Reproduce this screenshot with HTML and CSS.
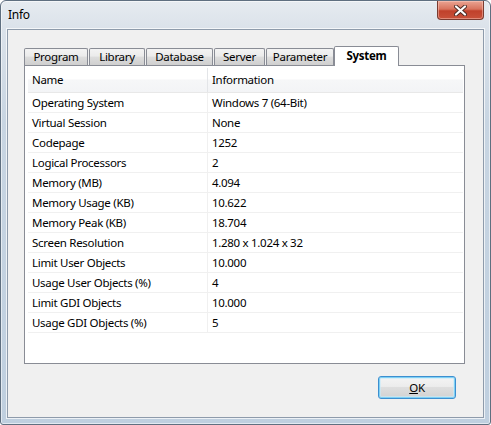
FILE: index.html
```html
<!DOCTYPE html>
<html>
<head>
<meta charset="utf-8">
<link rel="stylesheet" href="styles.css">
</head>
<body>
<div class="window">
  <div class="titlebar">
    <span class="title">Info</span>
    <button class="close" aria-label="Close">
      <svg width="13" height="11" viewBox="0 0 13 11">
        <path d="M2 1.5 L11 9.5 M11 1.5 L2 9.5" stroke="#4a2a24" stroke-width="4" stroke-linecap="round" fill="none"/>
        <path d="M2 1.5 L11 9.5 M11 1.5 L2 9.5" stroke="#ffffff" stroke-width="2.2" stroke-linecap="round" fill="none"/>
      </svg>
    </button>
  </div>
  <div class="client">
    <div class="tabs">
      <div class="tab t-program">Program</div>
      <div class="tab t-library">Library</div>
      <div class="tab t-database">Database</div>
      <div class="tab t-server">Server</div>
      <div class="tab t-parameter">Parameter</div>
      <div class="tab t-system selected">System</div>
    </div>
    <div class="panel">
      <div class="list">
        <div class="row head"><div class="c1">Name</div><div class="c2">Information</div></div>
        <div class="row"><div class="c1">Operating System</div><div class="c2">Windows 7 (64-Bit)</div></div>
        <div class="row"><div class="c1">Virtual Session</div><div class="c2">None</div></div>
        <div class="row"><div class="c1">Codepage</div><div class="c2">1252</div></div>
        <div class="row"><div class="c1">Logical Processors</div><div class="c2">2</div></div>
        <div class="row"><div class="c1">Memory (MB)</div><div class="c2">4.094</div></div>
        <div class="row"><div class="c1">Memory Usage (KB)</div><div class="c2">10.622</div></div>
        <div class="row"><div class="c1">Memory Peak (KB)</div><div class="c2">18.704</div></div>
        <div class="row"><div class="c1">Screen Resolution</div><div class="c2">1.280 x 1.024 x 32</div></div>
        <div class="row"><div class="c1">Limit User Objects</div><div class="c2">10.000</div></div>
        <div class="row"><div class="c1">Usage User Objects (%)</div><div class="c2">4</div></div>
        <div class="row"><div class="c1">Limit GDI Objects</div><div class="c2">10.000</div></div>
        <div class="row"><div class="c1">Usage GDI Objects (%)</div><div class="c2">5</div></div>
      </div>
    </div>
    <div class="buttons">
      <button class="ok"><u>O</u>K</button>
    </div>
  </div>
</div>
</body>
</html>
```
FILE: styles.css
```css
html, body {
  margin: 0;
  padding: 0;
  background: #ffffff;
}
body {
  font-family: "Noto Sans", "Open Sans", sans-serif;
  font-size: 11.5px;
  letter-spacing: -0.3px;
  color: #000;
}
.window {
  box-sizing: border-box;
  width: 491px;
  height: 425px;
  border: 1px solid #5f6f80;
  border-radius: 6px 6px 3px 3px;
  background: linear-gradient(to bottom, #e6ebf0 0px, #dbe2ea 28px, #c8d5e2 120px, #bfcfdf 100%);
  box-shadow: inset 0 0 0 1px rgba(255,255,255,0.55);
  display: flex;
  flex-direction: column;
}
.titlebar {
  height: 28px;
  display: flex;
  align-items: flex-start;
}
.title {
  padding: 6px 0 0 7px;
  line-height: 16px;
  font-size: 12px;
}
.close {
  margin: 0 6px 0 auto;
  width: 47px;
  height: 19px;
  padding: 0;
  border: 1px solid #7a3b30;
  border-top: none;
  border-radius: 0 0 4px 4px;
  background: linear-gradient(to bottom, #eaa493 0%, #d8735d 45%, #c0412b 55%, #c8513a 100%);
  box-shadow: inset 0 0 0 1px rgba(255,210,200,0.45);
  display: flex;
  align-items: center;
  justify-content: center;
}
.close svg {
  display: block;
}
.client {
  box-sizing: border-box;
  margin: 0 6px 6px 6px;
  height: 389px;
  border: 1px solid #8e9bab;
  box-shadow: 0 0 0 1px rgba(255,255,255,0.7);
  background: #f0f0f0;
  padding: 16px 18px 0 16px;
  display: flex;
  flex-direction: column;
}
.tabs {
  display: flex;
  align-items: flex-end;
  gap: 1px;
  height: 19px;
}
.tab {
  box-sizing: border-box;
  height: 17px;
  border: 1px solid #898c95;
  border-bottom: none;
  border-radius: 2px 2px 0 0;
  background: linear-gradient(to bottom, #f3f3f3 0%, #ebebeb 45%, #dddddd 50%, #cfcfcf 100%);
  text-align: center;
  line-height: 16px;
}
.t-program { width: 64px; }
.t-library { width: 56px; }
.t-database { width: 67px; }
.t-server { width: 51px; }
.t-parameter { width: 68px; }
.t-system { width: 65px; }
.tab.selected {
  position: relative;
  z-index: 1;
  height: 20px;
  margin-bottom: -1px;
  margin-left: -1px;
  background: #ffffff;
  font-weight: bold;
  line-height: 18px;
}
.panel {
  box-sizing: border-box;
  width: 441px;
  height: 299px;
  border: 1px solid #898c95;
  background: #ffffff;
  padding: 2px 1px 0 3px;
}
.row {
  display: flex;
  height: 20px;
  box-sizing: border-box;
  border-bottom: 1px solid #f0f0f0;
  line-height: 19px;
}
.row .c1 {
  box-sizing: border-box;
  width: 180px;
  padding-left: 4px;
  border-right: 1px solid #f0f0f0;
  white-space: nowrap;
}
.row .c2 {
  flex: 1;
  padding-left: 4px;
  white-space: nowrap;
}
.row.head {
  height: 25px;
  line-height: 24px;
  background: linear-gradient(to bottom, #ffffff 0%, #ffffff 45%, #f6f7f8 50%, #f3f4f6 100%);
  border-bottom: 1px solid #e8e8e8;
}
.row.head .c1 {
  border-right: 1px solid #e3e5e8;
}
.buttons {
  display: flex;
  justify-content: flex-end;
  margin-top: 12px;
  padding-right: 9px;
}
.ok {
  box-sizing: border-box;
  width: 78px;
  height: 23px;
  border: 1px solid #3c8fd0;
  border-radius: 3px;
  background: linear-gradient(to bottom, #f4f4f4 0%, #ececec 45%, #dedede 50%, #d2d2d2 100%);
  box-shadow: inset 0 0 0 1px #7fd0f4, inset 0 0 0 2px rgba(200,235,250,0.6);
  font-family: "Noto Sans", "Open Sans", sans-serif;
  font-size: 11.5px;
  letter-spacing: -0.3px;
  color: #000;
  padding: 0;
  line-height: 20px;
}
.ok u {
  text-decoration: underline;
}
```
